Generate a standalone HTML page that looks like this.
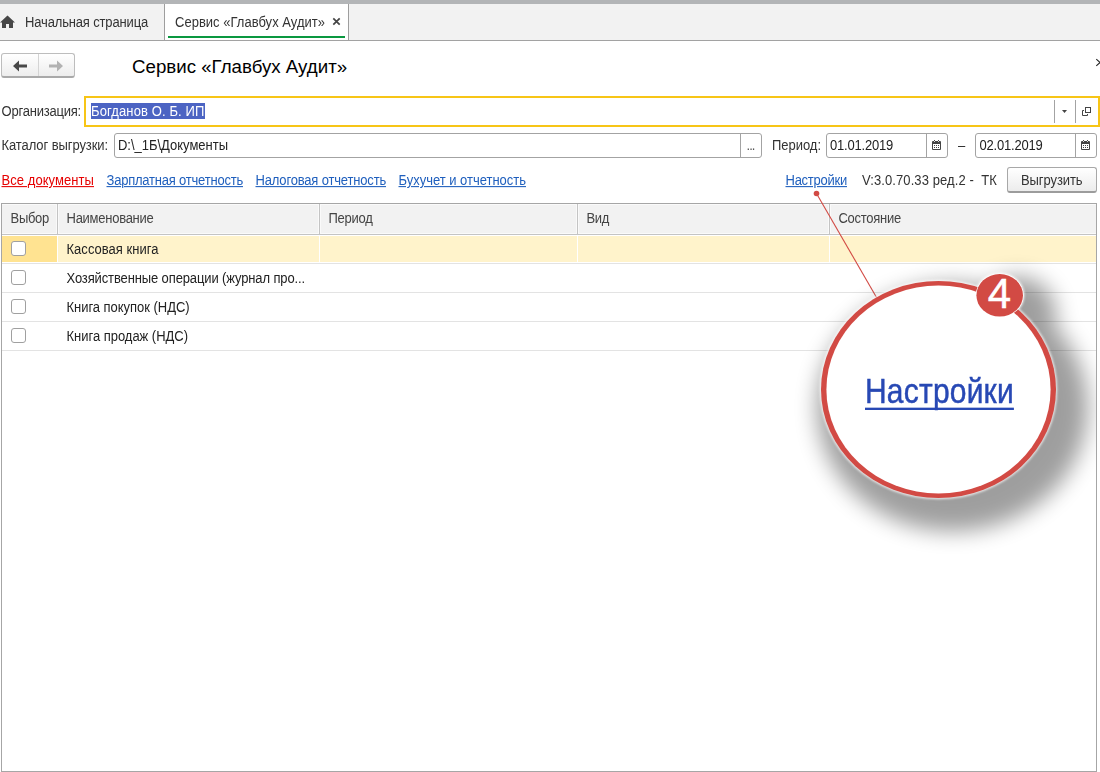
<!DOCTYPE html>
<html lang="ru"><head><meta charset="utf-8"><title>Сервис «Главбух Аудит»</title>
<style>
*{box-sizing:border-box;margin:0;padding:0}
html,body{width:1100px;height:772px;overflow:hidden;background:#fff}
body{font-family:"Liberation Sans",sans-serif;font-size:13px;color:#333;position:relative}
.abs{position:absolute;white-space:nowrap}
.t{position:absolute;white-space:nowrap;font-size:13px;line-height:15px;color:#333;transform:scaleY(1.07);transform-origin:0 12px}
.topbar{left:0;top:0;width:1100px;height:4px;background:#b3b5b7}
.tabbar{left:0;top:4px;width:1100px;height:37px;background:#f2f2f2;border-bottom:1px solid #a2a2a2}
.tab1{left:0;top:4px;width:165px;height:36px;border-right:1px solid #9e9e9e}
.tab2{left:165px;top:4px;width:184px;height:36px;background:#fff;border-right:1px solid #9e9e9e}
.green{left:168px;top:36px;width:177px;height:2px;background:#0a9840}
.nav{left:1px;top:53px;width:74px;height:25px;border:1px solid #bdbdbd;border-bottom:2px solid #a9a9a9;border-radius:3px;background:linear-gradient(#fff,#ededed)}
.navsep{left:38px;top:54px;width:1px;height:22px;background:#d4d4d4}
.inp{background:#fff;border:1px solid #a3a3a3;border-radius:3px;height:25px}
.org{left:84px;top:96px;width:1016px;height:31px;border:2px solid #f7c516;background:#fff}
.selbg{left:91px;top:103px;width:114px;height:16px;background:#4c64c3}
.isep{width:1px;background:#a3a3a3}
.btn{border:1px solid #a8a8a8;border-bottom:2px solid #9c9c9c;border-radius:3px;background:linear-gradient(#fff,#ececec)}
.grid{left:1px;top:203px;width:1096px;height:569px;border:1px solid #a6a6a6;background:#fff}
.thead{left:2px;top:204px;width:1094px;height:31px;background:#f2f2f2;border-bottom:1px solid #c4c4c4;box-shadow:inset 0 -1px 0 #fafafa,inset 0 1px 0 #fafafa}
.vsep{top:204px;width:3px;height:30px;background:#fafafa;border-left:1px solid #fafafa;border-right:1px solid #fafafa}
.vsep:after{content:"";position:absolute;left:0;top:0;width:1px;height:30px;background:#c4c4c4}
.rsep{left:2px;width:1094px;height:1px;background:#e3e3e3}
.selrow{left:2px;top:236px;width:1094px;height:26px;background:#fff3cb}
.selfirst{left:2px;top:236px;width:55px;height:26px;background:#ffe391}
.wgap{top:236px;width:1px;height:26px;background:#fff}
.cb{left:11px;width:15px;height:15px;border:1px solid #a0a0a0;border-radius:3px;background:#fff}
.ell{left:821px;top:281px;width:235px;height:217px;border-radius:50%;background:#fff;border:5px solid #d24a44;box-shadow:0 0 5px 2px rgba(255,255,255,.95),12px 18px 20px 16px rgba(0,0,0,.38)}
.badge{left:976px;top:273px;width:48px;height:44px;border-radius:50%;background:#d14b46;box-shadow:0 0 0 1px #fff}
.clip{left:780px;top:180px;width:316px;height:420px;overflow:hidden}
</style></head><body>
<div class="abs topbar"></div>
<div class="abs tabbar"></div>
<div class="abs tab1"></div>
<div class="abs tab2"></div>
<svg class="abs" style="left:0;top:14.7px" width="16" height="14" viewBox="0 0 16 14"><path d="M7.5 0.6 L15 7.6 H13 V13 H9 V9 H6 V13 H2 V7.6 H0 Z" fill="#474747"/></svg>
<svg class="abs" style="left:332px;top:17px" width="9" height="9" viewBox="0 0 9 9"><path d="M1.3 1.3 L7.7 7.7 M7.7 1.3 L1.3 7.7" stroke="#444" stroke-width="1.7" fill="none"/></svg>
<div class="abs green"></div>
<div class="abs nav"></div>
<div class="abs navsep"></div>
<svg class="abs" style="left:12px;top:59.5px" width="16" height="12" viewBox="0 0 16 12"><path d="M1 6 L7 0.6 V4.6 H15 V7.4 H7 V11.4 Z" fill="#484848"/></svg>
<svg class="abs" style="left:48px;top:59.5px" width="16" height="12" viewBox="0 0 16 12"><path d="M15 6 L9 0.6 V4.6 H1 V7.4 H9 V11.4 Z" fill="#b2b2b2"/></svg>
<div class="abs" id="title" style="left:132px;top:54.5px;font-size:18.7px;line-height:24px;color:#000">Сервис «Главбух Аудит»</div>
<svg class="abs" style="left:1095px;top:58px" width="5" height="9" viewBox="0 0 5 9"><path d="M1.3 1.2 L8.7 7.8 M8.7 1.2 L1.3 7.8" stroke="#222" stroke-width="1.1" fill="none"/></svg>

<div class="abs org"></div>
<div class="abs selbg"></div>
<div class="abs isep" style="left:1054px;top:100px;height:23px"></div>
<div class="abs isep" style="left:1075px;top:100px;height:23px"></div>
<svg class="abs" style="left:1062px;top:110px" width="5" height="3"><path d="M0 0 H5 L2.5 3 Z" fill="#444"/></svg>
<svg class="abs" style="left:1081px;top:106px" width="11" height="11" viewBox="0 0 11 11"><rect x="4.5" y="1.5" width="5" height="5" fill="none" stroke="#444"/><path d="M3 4.5 H1.5 V9.5 H6.5 V8" fill="none" stroke="#444"/></svg>

<div class="abs inp" style="left:114px;top:133px;width:648px"></div>
<div class="abs isep" style="left:740px;top:134px;height:23px"></div>
<div class="abs inp" style="left:826px;top:133px;width:122px"></div>
<div class="abs isep" style="left:926px;top:134px;height:23px"></div>
<div class="abs inp" style="left:975px;top:133px;width:122px"></div>
<div class="abs isep" style="left:1075px;top:134px;height:23px"></div>
<svg class="abs" style="left:931px;top:139px" width="11" height="12" viewBox="0 0 11 12"><rect x="1" y="2" width="9" height="9" rx="1" fill="#444"/><rect x="2" y="5" width="7" height="5" fill="#fff"/><rect x="3" y="1" width="1" height="1" fill="#444"/><rect x="7" y="1" width="1" height="1" fill="#444"/><rect x="3" y="2" width="1" height="1" fill="#ddd"/><rect x="7" y="2" width="1" height="1" fill="#ddd"/><g fill="#444"><rect x="3" y="6" width="1" height="1"/><rect x="5" y="6" width="1" height="1"/><rect x="7" y="6" width="1" height="1"/><rect x="3" y="8" width="1" height="1"/><rect x="5" y="8" width="1" height="1"/><rect x="7" y="8" width="1" height="1"/></g></svg>
<svg class="abs" style="left:1080px;top:139px" width="11" height="12" viewBox="0 0 11 12"><rect x="1" y="2" width="9" height="9" rx="1" fill="#444"/><rect x="2" y="5" width="7" height="5" fill="#fff"/><rect x="3" y="1" width="1" height="1" fill="#444"/><rect x="7" y="1" width="1" height="1" fill="#444"/><rect x="3" y="2" width="1" height="1" fill="#ddd"/><rect x="7" y="2" width="1" height="1" fill="#ddd"/><g fill="#444"><rect x="3" y="6" width="1" height="1"/><rect x="5" y="6" width="1" height="1"/><rect x="7" y="6" width="1" height="1"/><rect x="3" y="8" width="1" height="1"/><rect x="5" y="8" width="1" height="1"/><rect x="7" y="8" width="1" height="1"/></g></svg>

<div class="abs btn" style="left:1007px;top:167px;width:90px;height:26px"></div>

<div class="abs grid"></div>
<div class="abs thead"></div>
<div class="abs vsep" style="left:56px"></div>
<div class="abs vsep" style="left:318px"></div>
<div class="abs vsep" style="left:576px"></div>
<div class="abs vsep" style="left:828px"></div>
<div class="abs selrow"></div>
<div class="abs selfirst"></div>
<div class="abs wgap" style="left:57px"></div>
<div class="abs wgap" style="left:319px"></div>
<div class="abs wgap" style="left:577px"></div>
<div class="abs wgap" style="left:829px"></div>
<div class="abs rsep" style="top:263px"></div>
<div class="abs rsep" style="top:292px"></div>
<div class="abs rsep" style="top:321px"></div>
<div class="abs rsep" style="top:350px"></div>
<div class="abs cb" style="top:241px"></div>
<div class="abs cb" style="top:270px"></div>
<div class="abs cb" style="top:299px"></div>
<div class="abs cb" style="top:328px"></div>
<div class="t" id="t0" style="left:25px;top:15px;letter-spacing:-0.155px;">Начальная страница</div>
<div class="t" id="t1" style="left:175px;top:15px;letter-spacing:0.016px;">Сервис «Главбух Аудит»</div>
<div class="t" id="t2" style="left:1.5px;top:104px;letter-spacing:-0.211px;">Организация:</div>
<div class="t" id="t3" style="left:91px;top:104px;letter-spacing:0.120px;color:#fff">Богданов О. Б. ИП</div>
<div class="t" id="t4" style="left:1.5px;top:138px;letter-spacing:-0.086px;">Каталог выгрузки:</div>
<div class="t" id="t5" style="left:118px;top:138px;letter-spacing:-0.015px;color:#222">D:\_1Б\Документы</div>
<div class="t" id="t6" style="left:746.5px;top:138px;letter-spacing:-0.948px;color:#555">...</div>
<div class="t" id="t7" style="left:772px;top:138px;letter-spacing:-0.031px;">Период:</div>
<div class="t" id="t8" style="left:830px;top:138px;letter-spacing:-0.208px;color:#222">01.01.2019</div>
<div class="t" id="t9" style="left:958px;top:138px;">–</div>
<div class="t" id="t10" style="left:979.5px;top:138px;letter-spacing:-0.208px;color:#222">02.01.2019</div>
<div class="t" id="t11" style="left:1.5px;top:173px;letter-spacing:0.064px;color:#e60000;text-decoration:underline">Все документы</div>
<div class="t" id="t12" style="left:106.5px;top:173px;letter-spacing:-0.213px;color:#1f5fbd;text-decoration:underline">Зарплатная отчетность</div>
<div class="t" id="t13" style="left:255.5px;top:173px;letter-spacing:-0.173px;color:#1f5fbd;text-decoration:underline">Налоговая отчетность</div>
<div class="t" id="t14" style="left:398.5px;top:173px;letter-spacing:-0.016px;color:#1f5fbd;text-decoration:underline">Бухучет и отчетность</div>
<div class="t" id="t15" style="left:785.5px;top:173px;letter-spacing:-0.250px;color:#1f5fbd;text-decoration:underline">Настройки</div>
<div class="t" id="t16" style="left:862px;top:173px;letter-spacing:0.090px;">V:3.0.70.33 ред.2 -  ТК</div>
<div class="t" id="t17" style="left:1021px;top:173px;letter-spacing:-0.089px;">Выгрузить</div>
<div class="t" id="t18" style="left:10.5px;top:211px;letter-spacing:-0.284px;color:#444">Выбор</div>
<div class="t" id="t19" style="left:66.5px;top:211px;letter-spacing:-0.260px;color:#444">Наименование</div>
<div class="t" id="t20" style="left:328.5px;top:211px;letter-spacing:-0.268px;color:#444">Период</div>
<div class="t" id="t21" style="left:586.5px;top:211px;letter-spacing:-0.344px;color:#444">Вид</div>
<div class="t" id="t22" style="left:838.5px;top:211px;letter-spacing:-0.264px;color:#444">Состояние</div>
<div class="t" id="t23" style="left:66.5px;top:242px;letter-spacing:0.026px;color:#222">Кассовая книга</div>
<div class="t" id="t24" style="left:66.5px;top:271px;letter-spacing:-0.125px;color:#222">Хозяйственные операции (журнал про...</div>
<div class="t" id="t25" style="left:66.5px;top:300px;letter-spacing:-0.033px;color:#222">Книга покупок (НДС)</div>
<div class="t" id="t26" style="left:66.5px;top:329px;letter-spacing:-0.022px;color:#222">Книга продаж (НДС)</div>
<div class="abs clip">
<svg class="abs" style="left:0;top:0" width="316" height="420" viewBox="780 180 316 420">
<defs><filter id="bl" x="-30%" y="-30%" width="160%" height="160%"><feGaussianBlur stdDeviation="11"/></filter><filter id="gl" x="-10%" y="-10%" width="120%" height="120%"><feGaussianBlur stdDeviation="1"/></filter></defs>
<line x1="816.5" y1="193.5" x2="878" y2="300" stroke="#d24a44" stroke-width="1.1"/><circle cx="816.5" cy="193.5" r="2.8" fill="#d24a44"/>
<g filter="url(#bl)" opacity=".375"><ellipse cx="952.5" cy="407.5" rx="135.5" ry="124"/><ellipse cx="1017" cy="313" rx="39" ry="36.5"/></g>
<g filter="url(#gl)" fill="#fff" opacity=".75"><ellipse cx="938.5" cy="389.5" rx="118.7" ry="109.8"/><ellipse cx="999.7" cy="295.3" rx="24.8" ry="22.7"/></g>
<ellipse cx="938.5" cy="389.5" rx="117.5" ry="108.6" fill="#d24a44"/>
<ellipse cx="938.5" cy="389.5" rx="112.1" ry="104" fill="#fff"/>
<ellipse cx="999.7" cy="295.3" rx="24" ry="21.9" fill="#fff"/>
<ellipse cx="999.7" cy="295.3" rx="23.3" ry="21.2" fill="#d24a44"/>
<text x="999.4" y="308.2" text-anchor="middle" font-family="Liberation Sans, sans-serif" font-size="42" fill="#fff" stroke="#fff" stroke-width=".5">4</text>
</svg>
<div class="abs" id="big" style="left:85px;top:195px;font-size:30px;line-height:36px;letter-spacing:.2px;color:#2748b4;text-decoration:underline;text-decoration-thickness:2px;text-underline-offset:4px;text-decoration-skip-ink:none;-webkit-text-stroke:.4px #2748b4;filter:blur(.5px);transform:scaleY(1.165);transform-origin:0 28px">Настройки</div>
</div>
</body></html>
